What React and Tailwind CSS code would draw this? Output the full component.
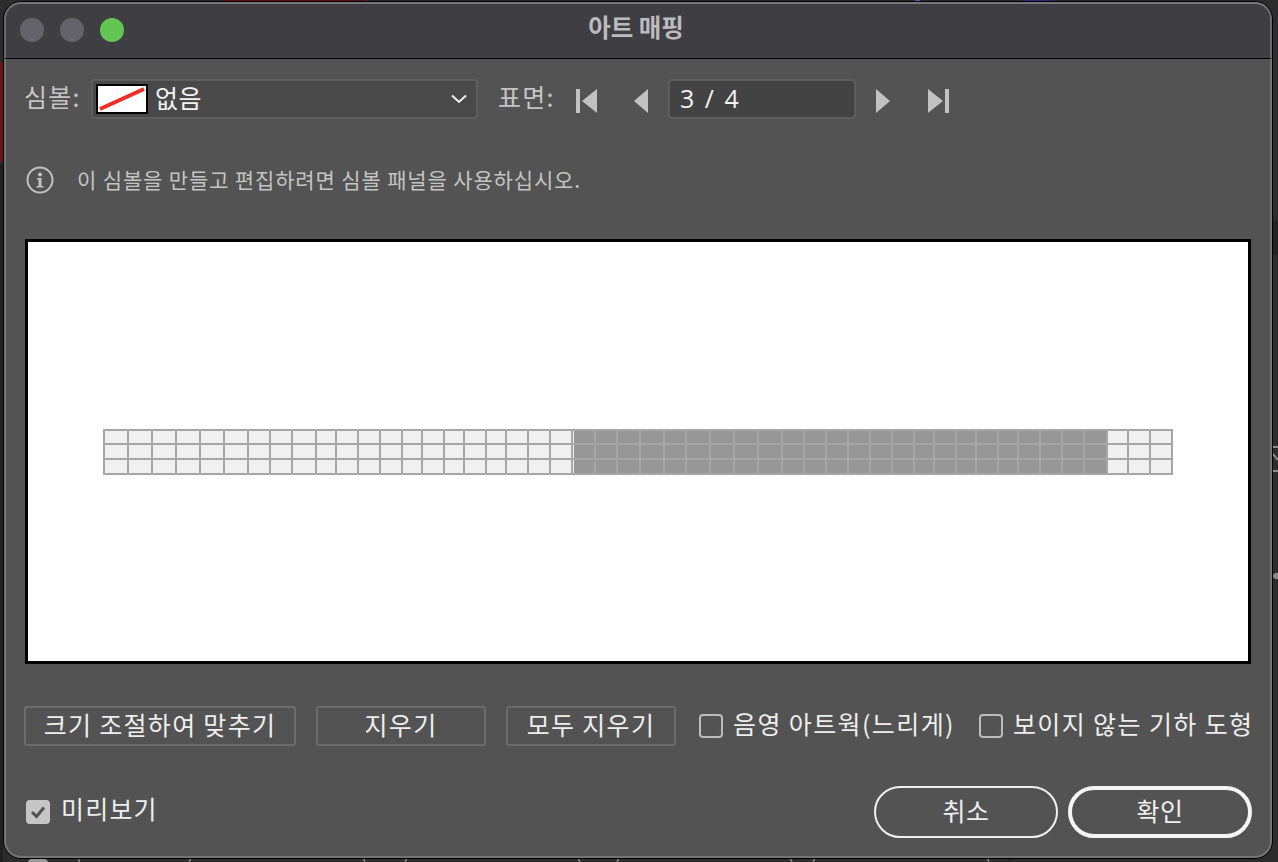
import React from 'react';

const font = { fontFamily: '"Noto Sans CJK KR", "Noto Sans", sans-serif' };

// grid column lines of the preview art, read off the picture
const leftCols = [104, 128, 152, 176, 200, 224, 248, 270, 292, 316, 336, 358, 380, 402, 422, 444, 464, 486, 506, 528, 550, 572];
const midCols = [595, 617, 640, 664, 686, 710, 734, 758, 782, 804, 826, 848, 870, 892, 914, 934, 956, 976, 998, 1018, 1040, 1062, 1084, 1107];
const rightCols = [1128, 1150, 1172];
const rows = [430, 444, 459, 474];

const ArtPreview = () => {
  // box starts at x=28, y=242 in the page
  const ox = 28;
  const oy = 242;
  const allCols = [...leftCols, ...midCols, ...rightCols];
  return (
    <svg width="1220" height="419" className="block">
      <rect x={104 - ox} y={430 - oy} width={1068} height={44} fill="#f0f0f0" />
      <rect x={574 - ox} y={430 - oy} width={533} height={44} fill="#979797" />
      {allCols.map((x) => (
        <line key={x} x1={x - ox} x2={x - ox} y1={429 - oy} y2={475 - oy} stroke="#a6a6a6" strokeWidth="2" />
      ))}
      {rows.map((y) => (
        <line key={y} x1={103 - ox} x2={1173 - ox} y1={y - oy} y2={y - oy} stroke="#a6a6a6" strokeWidth="2" />
      ))}
    </svg>
  );
};

const Btn = ({ width, children }) => (
  <button className={`${width} h-10 border-2 border-[#6c6c6c] rounded-[3px] text-[25px] leading-none tracking-[1.3px] text-[#eeeeee] flex items-center justify-center pb-[4px]`}>
    {children}
  </button>
);

const CheckRow = ({ label }) => (
  <label className="flex items-center">
    <span className="w-6 h-6 border-2 border-[#bdbdbd] rounded-[4px] -mt-[1px]" />
    <span className="ml-[10px] pb-[6px] text-[25px] leading-none tracking-[1.4px] text-[#eeeeee] whitespace-nowrap">{label}</span>
  </label>
);

const App = () => {
  return (
    <div className="relative w-[1278px] h-[862px] overflow-hidden bg-[#2c2c2c] pt-[1px] pl-[3px]" style={font}>
      {/* what peeks out from behind the dialog */}
      <div className="absolute left-0 top-[62px] w-[3px] h-[100px] bg-[#6a1420]" />
      <div className="absolute left-[224px] top-0 w-[140px] h-[2px] bg-[#5c0d18]" />
      <div className="absolute left-[1023px] top-0 w-[28px] h-[2px] bg-[#2c2c7c]" />
      <div className="absolute left-[915px] top-0 w-[5px] h-[2px] bg-[#3a66c8]" />
      <div className="absolute left-0 top-[164px] w-[3px] h-[698px] bg-[#1f1f1f]" />
      <div className="absolute right-0 top-[221px] w-[5px] h-[34px] bg-[#222222]" />
      <svg width="5" height="26" viewBox="0 0 5 26" className="absolute right-0 top-[446px]">
        <path d="M0 1 H5 M0 8 L5 14 M0 25 H5" fill="none" stroke="#8a8a8a" strokeWidth="2" />
      </svg>
      <div className="absolute right-0 top-[573px] w-[5px] h-[6px] rounded-l-full bg-[#8a8a8a]" />
      <div className="absolute left-[28px] top-[859px] w-[20px] h-[8px] rounded-t bg-[#9a9a9a]" />
      <svg width="1278" height="4" className="absolute left-0 bottom-0">
        <path d="M79 0 V4 M189 4 L191 0 M363 0 L365 4 M405 4 L407 0 M578 0 L580 4 M617 4 L619 0 M790 0 L792 4 M813 4 L815 0 M987 0 L989 4" fill="none" stroke="#8a8a8a" strokeWidth="1.5" />
        <path d="M1010 0 V4" fill="none" stroke="#1a1a1a" strokeWidth="1.5" />
      </svg>

      {/* dialog */}
      <div className="relative w-[1270px] h-[858px] border border-black rounded-[18px] overflow-hidden bg-[#535353] flex flex-col">
        <div className="h-[57px] shrink-0 bg-[#3f3e43] border-t-2 border-l-2 border-r-2 border-t-[#77777b] border-l-[#6a6a6e] border-r-[#6a6a6e] border-b border-b-black flex items-center relative rounded-t-[17px]">
          <div className="flex gap-4 ml-[14px] -mt-[2px]">
            <span className="w-6 h-6 rounded-full bg-[#646369]" />
            <span className="w-6 h-6 rounded-full bg-[#646369]" />
            <span className="w-6 h-6 rounded-full bg-[#62c554]" />
          </div>
          <div className="absolute inset-0 flex items-center justify-center pb-[7px] pr-[4px] text-[24.5px] font-bold text-[#bcbbbf]">아트 매핑</div>
        </div>

        <div className="flex-1 flex flex-col border-l-2 border-r-2 border-b-2 border-[#747474] rounded-b-[17px] pl-[19px]">
          {/* symbol + surface row */}
          <div className="flex items-center mt-[20px] h-10">
            <span className="w-[66px] pb-[6px] -ml-[1px] mr-[1px] text-[25px] leading-none tracking-[1.2px] text-[#c4c4c4] whitespace-nowrap">심볼:</span>
            <div className="w-[387px] h-10 bg-[#494949] border-2 border-[#5e5e5e] rounded-[4px] flex items-center pl-[3px] pr-[8px]">
              <svg width="52" height="30" className="shrink-0">
                <rect x="1" y="1" width="50" height="28" fill="#fff" stroke="#000" strokeWidth="2" />
                <line x1="4" y1="25" x2="48" y2="5" stroke="#ee2e24" strokeWidth="4" />
              </svg>
              <span className="ml-[7px] pb-[3px] text-[25px] leading-none tracking-[0.5px] text-[#f2f2f2]">없음</span>
              <svg width="18" height="10" viewBox="0 0 18 10" className="ml-auto">
                <path d="M2 1.5 L9 8 L16 1.5" fill="none" stroke="#f0f0f0" strokeWidth="2" />
              </svg>
            </div>
            <span className="ml-[20px] w-[78px] pb-[6px] text-[25px] leading-none tracking-[1.2px] text-[#c4c4c4] whitespace-nowrap">표면:</span>
            <svg width="21" height="24" viewBox="0 0 21 24" className="mt-[3px]" fill="#c2c2c2">
              <rect x="0" y="0" width="4" height="24" />
              <path d="M21 0 V24 L6 12 Z" />
            </svg>
            <svg width="14" height="24" viewBox="0 0 14 24" className="ml-[37px] mt-[3px]" fill="#c2c2c2">
              <path d="M14 0 V24 L0 12 Z" />
            </svg>
            <div className="ml-[20px] w-[188px] h-10 bg-[#434343] border-2 border-[#5e5e5e] rounded-[4px] flex items-center pl-[10px] pb-[1px] text-[25px] leading-none tracking-[2px] text-[#f2f2f2]" style={{ fontFamily: '"Open Sans", sans-serif' }}>
              3 / 4
            </div>
            <svg width="14" height="24" viewBox="0 0 14 24" className="ml-[20px] mt-[3px]" fill="#c2c2c2">
              <path d="M0 0 V24 L14 12 Z" />
            </svg>
            <svg width="21" height="24" viewBox="0 0 21 24" className="ml-[38px] mt-[3px]" fill="#c2c2c2">
              <path d="M0 0 V24 L15 12 Z" />
              <rect x="17" y="0" width="4" height="24" />
            </svg>
          </div>

          {/* info line */}
          <div className="flex items-center mt-[40px] h-[42px]">
            <svg width="28" height="28" viewBox="0 0 28 28" className="ml-[1px] shrink-0">
              <circle cx="14" cy="14" r="12.5" fill="none" stroke="#c2c2c2" strokeWidth="2" />
              <circle cx="14" cy="8.5" r="2" fill="#c2c2c2" />
              <path d="M11 12 H15.5 V20 H17.5 V21.5 H10.5 V20 H12.5 V13.5 H11 Z" fill="#c2c2c2" />
            </svg>
            <span className="ml-[23px] pb-[2px] text-[21px] leading-none tracking-[0.85px] text-[#c4c4c4] whitespace-nowrap">이 심볼을 만들고 편집하려면 심볼 패널을 사용하십시오.</span>
          </div>

          {/* art area */}
          <div className="mt-[38px] w-[1226px] h-[425px] border-[3px] border-black bg-white">
            <ArtPreview />
          </div>

          {/* action row */}
          <div className="flex items-center mt-[42px] h-10 -ml-[1px]">
            <Btn width="w-[272px]">크기 조절하여 맞추기</Btn>
            <div className="w-5" />
            <Btn width="w-[170px]">지우기</Btn>
            <div className="w-5" />
            <Btn width="w-[170px]">모두 지우기</Btn>
            <div className="w-[23px]" />
            <CheckRow label="음영 아트웍(느리게)" />
            <div className="w-[24px]" />
            <CheckRow label="보이지 않는 기하 도형" />
          </div>

          {/* footer */}
          <div className="flex items-center mt-10 h-[52px]">
            <span className="ml-[1px] w-6 h-6 rounded-[4px] bg-[#c6c6c6] flex items-center justify-center">
              <svg width="16" height="14" viewBox="0 0 16 14">
                <path d="M2 7 L6.5 11.5 L14 2.5" fill="none" stroke="#535353" strokeWidth="3" />
              </svg>
            </span>
            <span className="ml-[11px] -mt-[8px] text-[25px] leading-none tracking-[1.2px] text-[#eeeeee]">미리보기</span>
            <button className="ml-auto w-[184px] h-[52px] pb-[4px] border-2 border-[#f0f0f0] rounded-[26px] text-[25px] leading-none tracking-[0.5px] text-[#eeeeee]">취소</button>
            <button className="ml-[10px] mr-[18px] w-[184px] h-[52px] pb-[4px] border-4 border-[#f4f4f4] rounded-[26px] text-[25px] leading-none tracking-[0.5px] text-[#eeeeee]">확인</button>
          </div>
        </div>
      </div>
    </div>
  );
};

export default App;
